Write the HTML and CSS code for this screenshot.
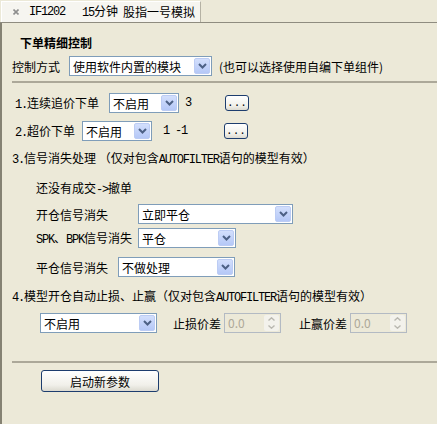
FILE: index.html
```html
<!DOCTYPE html>
<html lang="zh-CN">
<head>
    <meta charset="UTF-8">
    <title>IF1202 15分钟 股指一号模拟</title>
    <link rel="stylesheet" href="styles.css">
</head>
<body>
    <div class="window">
        <div class="tabbar">
            <div class="tab">
                <svg class="close" width="6" height="6" viewBox="0 0 6 6"><path d="M0.5 0.5 L5.5 5.5 M5.5 0.5 L0.5 5.5" stroke="#8e8e8e" stroke-width="1.6"/></svg>
                <span class="asc">IF1202</span>
                <span class="period"><span class="asc">15</span>分钟</span>
                <span class="name">股指一号模拟</span>
            </div>
        </div>

        <div class="panel">
            <div class="head">下单精细控制</div>

            <div class="row mode-row">
                <span class="lbl lbl-mode">控制方式</span>
                <div class="combo w-mode"><span class="combo-text">使用软件内置的模块</span><span class="arrow"><svg width="9" height="6" viewBox="0 0 9 6"><path d="M1 1 L4.5 4.5 L8 1" fill="none" stroke="#4d6185" stroke-width="2"/></svg></span></div>
                <span class="hint">(也可以选择使用自编下单组件)</span>
            </div>

            <div class="sep sep-top"></div>

            <!-- 追价 / 超价 -->
            <div class="row row-1">
                <span class="lbl lbl-chase"><span class="asc">1.</span>连续追价下单</span>
                <div class="combo w-small"><span class="combo-text">不启用</span><span class="arrow"><svg width="9" height="6" viewBox="0 0 9 6"><path d="M1 1 L4.5 4.5 L8 1" fill="none" stroke="#4d6185" stroke-width="2"/></svg></span></div>
                <span class="val val-chase asc">3</span>
                <button class="btn btn-dots">...</button>
            </div>

            <div class="row row-2">
                <span class="lbl lbl-over"><span class="asc">2.</span>超价下单</span>
                <div class="combo w-small"><span class="combo-text">不启用</span><span class="arrow"><svg width="9" height="6" viewBox="0 0 9 6"><path d="M1 1 L4.5 4.5 L8 1" fill="none" stroke="#4d6185" stroke-width="2"/></svg></span></div>
                <span class="val val-over asc">1 -1</span>
                <button class="btn btn-dots">...</button>
            </div>

            <!-- 信号消失 -->
            <div class="title title-3"><span class="asc">3.</span>信号消失处理 （仅对包含<span class="asc">AUTOFILTER</span>语句的模型有效）</div>
            <div class="sub">还没有成交<span class="asc">-&gt;</span>撤单</div>

            <div class="row sig-row sig-open">
                <span class="lbl lbl-sig">开仓信号消失</span>
                <div class="combo w-open"><span class="combo-text">立即平仓</span><span class="arrow"><svg width="9" height="6" viewBox="0 0 9 6"><path d="M1 1 L4.5 4.5 L8 1" fill="none" stroke="#4d6185" stroke-width="2"/></svg></span></div>
            </div>

            <div class="row sig-row sig-spk">
                <span class="lbl lbl-sig"><span class="asc">SPK</span>、<span class="asc">BPK</span>信号消失</span>
                <div class="combo w-spk"><span class="combo-text">平仓</span><span class="arrow"><svg width="9" height="6" viewBox="0 0 9 6"><path d="M1 1 L4.5 4.5 L8 1" fill="none" stroke="#4d6185" stroke-width="2"/></svg></span></div>
            </div>

            <div class="row sig-row sig-close">
                <span class="lbl lbl-sig-close">平仓信号消失</span>
                <div class="combo w-close"><span class="combo-text">不做处理</span><span class="arrow"><svg width="9" height="6" viewBox="0 0 9 6"><path d="M1 1 L4.5 4.5 L8 1" fill="none" stroke="#4d6185" stroke-width="2"/></svg></span></div>
            </div>

            <!-- 止损止赢 -->
            <div class="title title-4"><span class="asc">4.</span>模型开仓自动止损、止赢（仅对包含<span class="asc">AUTOFILTER</span>语句的模型有效）</div>

            <div class="row row-stop">
                <div class="combo w-stop"><span class="combo-text">不启用</span><span class="arrow"><svg width="9" height="6" viewBox="0 0 9 6"><path d="M1 1 L4.5 4.5 L8 1" fill="none" stroke="#4d6185" stroke-width="2"/></svg></span></div>
                <span class="lbl lbl-loss">止损价差</span>
                <div class="spin"><span class="spin-text">0.0</span><span class="spin-btns"><span class="spin-up"><svg width="7" height="4" viewBox="0 0 7 4"><path d="M0.5 3.5 L3.5 0.8 L6.5 3.5" fill="none" stroke="#b9b8b0" stroke-width="1.4"/></svg></span><span class="spin-down"><svg width="7" height="4" viewBox="0 0 7 4"><path d="M0.5 0.5 L3.5 3.2 L6.5 0.5" fill="none" stroke="#b9b8b0" stroke-width="1.4"/></svg></span></span></div>
                <span class="lbl lbl-win">止赢价差</span>
                <div class="spin"><span class="spin-text">0.0</span><span class="spin-btns"><span class="spin-up"><svg width="7" height="4" viewBox="0 0 7 4"><path d="M0.5 3.5 L3.5 0.8 L6.5 3.5" fill="none" stroke="#b9b8b0" stroke-width="1.4"/></svg></span><span class="spin-down"><svg width="7" height="4" viewBox="0 0 7 4"><path d="M0.5 0.5 L3.5 3.2 L6.5 0.5" fill="none" stroke="#b9b8b0" stroke-width="1.4"/></svg></span></span></div>
            </div>

            <div class="sep sep-bottom"></div>

            <button class="btn btn-start">启动新参数</button>
        </div>
    </div>
</body>
</html>
```

FILE: styles.css
```css
/* General */
body {
    margin: 0;
    background: #ece9d8;
    font-family: "Noto Sans CJK SC", sans-serif;
    font-size: 12px;
    color: #000;
}

/* latin text in the old fixed-width look */
.asc {
    font-family: "Liberation Mono", monospace;
    letter-spacing: -1.2px;
}

.window {
    width: 437px;
    height: 424px;
    display: flex;
    flex-direction: column;
}

/* Tab strip */
.tabbar {
    height: 22px;
    border-bottom: 1px solid #8f8c80;
    display: flex;
    align-items: flex-end;
    padding-left: 1px;
}

.tab {
    flex: none;
    height: 21px;
    width: 200px;
    box-sizing: border-box;
    overflow: hidden;
    background: #f6f5f0;
    border-top: 1px solid #fff;
    border-left: 1px solid #fff;
    border-right: 1px solid #b5b2a4;
    display: flex;
    align-items: center;
    padding-left: 11px;
    line-height: 14px;
    white-space: nowrap;
}

.tab span {
    flex: none;
}

.close {
    flex: none;
    margin-right: 10px;
}

.period {
    margin-left: 17px;
}

.name {
    margin-left: 5px;
}

/* Panel */
.panel {
    flex: 1;
    border-left: 2px solid #858273;
    padding-top: 12px;
}

.head {
    height: 16px;
    line-height: 16px;
    margin-left: 18px;
    font-weight: bold;
}

.row {
    display: flex;
    align-items: center;
    height: 20px;
}

.lbl {
    flex: none;
    white-space: nowrap;
}

.mode-row {
    margin-top: 5px;
    padding-left: 10px;
}

.lbl-mode {
    width: 57px;
}

.hint {
    margin-left: 7px;
    white-space: nowrap;
}

.sep {
    height: 2px;
    margin-left: 10px;
    background: #aca899;
}

.sep-top {
    margin-top: 5px;
}

.sep-bottom {
    margin-top: 28px;
}

.row-1 {
    margin-top: 10px;
    padding-left: 13px;
}

.row-2 {
    margin-top: 8px;
    padding-left: 13px;
}

.lbl-chase {
    width: 94px;
}

.lbl-over {
    width: 67px;
}

.val {
    flex: none;
    white-space: pre;
}

.val-chase {
    margin-left: 6px;
    width: 40px;
}

.val-over {
    margin-left: 11px;
    width: 61px;
}

/* Combo box */
.combo {
    flex: none;
    height: 20px;
    box-sizing: border-box;
    border: 1px solid #7f9db9;
    background: #fff;
    display: flex;
    align-items: center;
    justify-content: space-between;
    padding: 1px;
}

.combo-text {
    padding-left: 2px;
    white-space: nowrap;
    overflow: hidden;
}

.arrow {
    width: 16px;
    height: 16px;
    box-sizing: border-box;
    border: 1px solid #bcccf4;
    border-radius: 2px;
    background: linear-gradient(#d3dffc, #b5c8f7);
    display: flex;
    align-items: center;
    justify-content: center;
}

.w-mode { width: 143px; }
.w-small { width: 70px; }
.w-open { width: 155px; }
.w-spk { width: 98px; }
.w-close { width: 117px; }
.w-stop { width: 117px; }

/* Buttons */
.btn {
    font-family: "Noto Sans CJK SC", sans-serif;
    font-size: 12px;
    color: #000;
    border: 1px solid #1d3d6e;
    border-radius: 3px;
    background: linear-gradient(#ffffff, #f1f0ea 70%, #dcdad0);
    padding: 0;
    cursor: pointer;
}

.btn-dots {
    width: 24px;
    height: 16px;
    line-height: 12px;
    font-size: 11px;
    font-family: "Liberation Mono", monospace;
}

.btn-start {
    display: block;
    margin: 7px 0 0 39px;
    width: 118px;
    height: 22px;
}

/* Sections */
.title {
    height: 16px;
    line-height: 16px;
    margin-left: 10px;
    white-space: nowrap;
}

.title-3 {
    margin-top: 9px;
}

.title-4 {
    margin-top: 11px;
}

.sub {
    height: 16px;
    line-height: 16px;
    margin: 14px 0 0 34px;
}

.sig-row {
    padding-left: 34px;
}

.sig-open { margin-top: 8px; }
.sig-spk { margin-top: 4px; }
.sig-close { margin-top: 9px; }

.lbl-sig {
    width: 102px;
}

.lbl-sig-close {
    width: 82px;
}

/* Stop loss row */
.row-stop {
    margin-top: 9px;
    padding-left: 38px;
}

.lbl-loss {
    margin-left: 16px;
    width: 51px;
}

.lbl-win {
    margin-left: 18px;
    width: 51px;
}

.spin {
    flex: none;
    width: 57px;
    height: 20px;
    box-sizing: border-box;
    border: 1px solid #b3bac3;
    background: #ece9d8;
    display: flex;
    justify-content: space-between;
    padding: 1px;
}

.spin-text {
    color: #aca899;
    padding-left: 2px;
    line-height: 16px;
}

.spin-btns {
    width: 15px;
    display: flex;
    flex-direction: column;
    background: #f3f2ec;
    border-radius: 2px;
}

.spin-up, .spin-down {
    flex: 1;
    display: flex;
    align-items: center;
    justify-content: center;
}
```
